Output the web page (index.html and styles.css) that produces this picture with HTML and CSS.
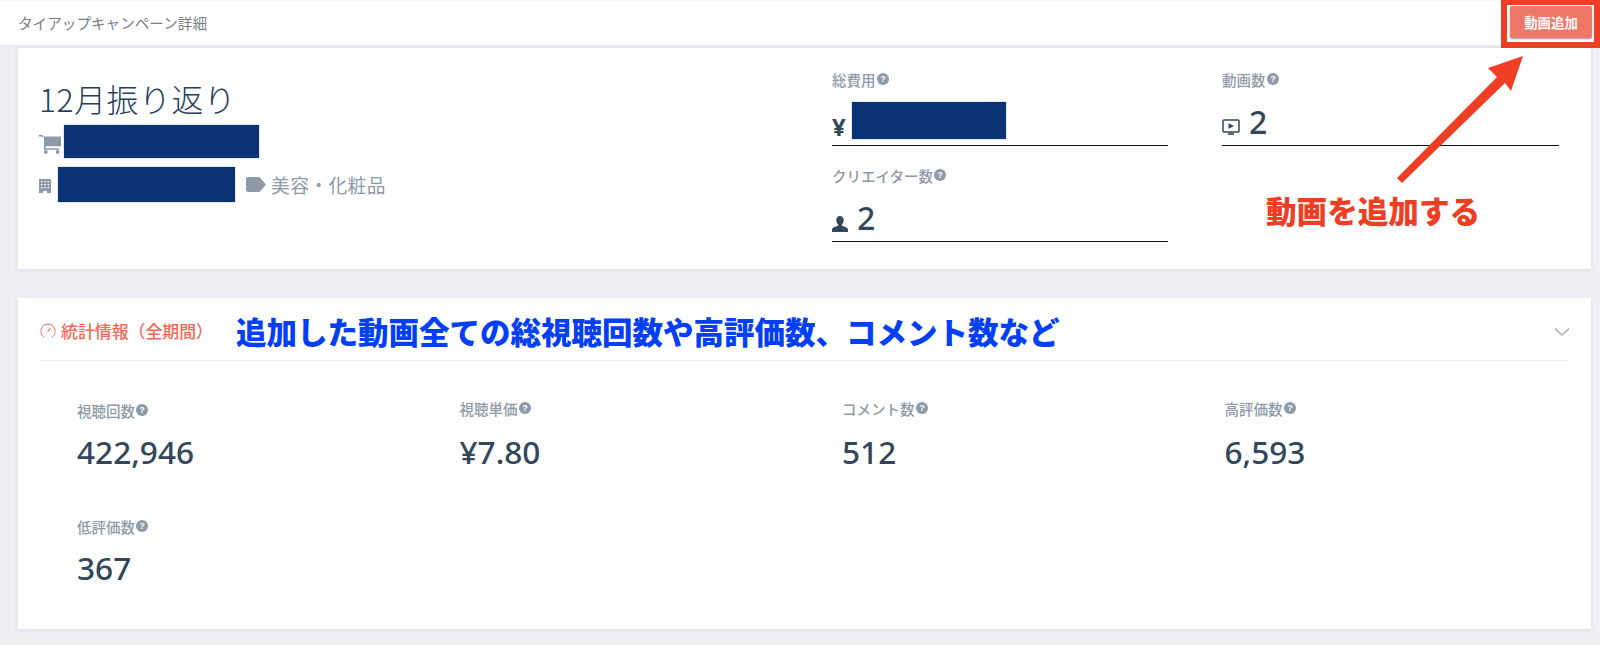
FILE: index.html
```html
<!DOCTYPE html>
<html lang="ja">
<head>
<meta charset="utf-8">
<title>タイアップキャンペーン詳細</title>
<link rel="stylesheet" href="styles.css">
</head>
<body>
<header class="topbar">
  <span class="crumb">タイアップキャンペーン詳細</span>
  <button class="add-btn">動画追加</button>
</header>
<main class="content">
  <section class="card summary">
    <div class="info">
      <h1 class="title">12月振り返り</h1>
      <div class="info-row row-product">
        <svg class="ic-cart" viewBox="0 0 22 20"><path d="M0 1h3.600l1 1.600H22v9.600H6.600v2h13.600v1.600H5V3.400L2.800 2.600H0z" fill="#8e9aa8"/><circle cx="6.800" cy="18" r="1.900" fill="#8e9aa8"/><circle cx="18.600" cy="18" r="1.900" fill="#8e9aa8"/></svg>
        <span class="redact redact-product"></span>
      </div>
      <div class="info-row row-company">
        <svg class="ic-building" viewBox="0 0 12 14"><path fill="#8e9aa8" fill-rule="evenodd" d="M0 0h12v14H8v-2H4v2H0zM2 2v1.200h1.500V2zm3.200 0v1.200h1.600V2zM8.500 2v1.200H10V2zM2 5v1.200h1.500V5zm3.200 0v1.200h1.600V5zM8.500 5v1.200H10V5zM2 8v1.200h1.500V8zm3.200 0v1.200h1.600V8zM8.500 8v1.200H10V8z"/></svg>
        <span class="redact redact-company"></span>
        <svg class="ic-tag" viewBox="0 0 20 15"><path d="M2 0h11.500L20 7.500 13.500 15H2a2 2 0 0 1-2-2V2a2 2 0 0 1 2-2z" fill="#8e9aa8"/></svg>
        <span class="category">美容・化粧品</span>
      </div>
    </div>
    <div class="fields">
      <div class="field">
        <div class="label">総費用<svg class="q" viewBox="0 0 12 12"><use href="#q"/></svg></div>
        <div class="field-value">
          <span class="yen">¥</span><span class="redact redact-cost"></span>
        </div>
      </div>
      <div class="field">
        <div class="label">動画数<svg class="q" viewBox="0 0 12 12"><use href="#q"/></svg></div>
        <div class="field-value">
          <svg class="ic-tv" viewBox="0 0 18 16"><path d="M2 1h14a1 1 0 0 1 1 1v10a1 1 0 0 1-1 1H2a1 1 0 0 1-1-1V2a1 1 0 0 1 1-1z" fill="none" stroke="#33475b" stroke-width="1.500"/><path d="M6.500 4.300v5.400L12 7z" fill="#33475b"/><path d="M6 15h6" stroke="#33475b" stroke-width="1.600"/></svg>
          <span class="num">2</span>
        </div>
      </div>
      <div class="field">
        <div class="label">クリエイター数<svg class="q" viewBox="0 0 12 12"><use href="#q"/></svg></div>
        <div class="field-value">
          <svg class="ic-user" viewBox="0 0 16 16"><path d="M8 0c2.300 0 3.700 1.700 3.700 4.200 0 2-.9 3.500-1.800 4.300v1.200c2.800.8 6.100 2.100 6.100 3.800V16H0v-2.500c0-1.700 3.300-3 6.100-3.800V8.500C5.200 7.700 4.300 6.200 4.300 4.200 4.300 1.700 5.700 0 8 0z" fill="#33475b"/></svg>
          <span class="num">2</span>
        </div>
      </div>
    </div>
  </section>

  <section class="card stats">
    <div class="stats-head">
      <svg class="ic-gauge" viewBox="0 0 16 16"><path d="M4.300 14.300A7.200 7.200 0 1 1 11.700 14.300" fill="none" stroke="#f2776a" stroke-width="1"/><path d="M7.600 8.600 10.700 5.400" stroke="#f2776a" stroke-width="1.200"/><path d="M8 1v1.300" stroke="#f2776a"/></svg>
      <span class="stats-title">統計情報（全期間）</span>
      <svg class="chevron" viewBox="0 0 16 10"><path d="M1 1.500 8 8l7-6.500" fill="none" stroke="#a9acb2" stroke-width="1.500"/></svg>
    </div>
    <div class="stat-grid">
      <div class="stat"><div class="label">視聴回数<svg class="q" viewBox="0 0 12 12"><use href="#q"/></svg></div><div class="stat-num">422,946</div></div>
      <div class="stat"><div class="label raised">視聴単価<svg class="q" viewBox="0 0 12 12"><use href="#q"/></svg></div><div class="stat-num">¥7.80</div></div>
      <div class="stat"><div class="label raised">コメント数<svg class="q" viewBox="0 0 12 12"><use href="#q"/></svg></div><div class="stat-num">512</div></div>
      <div class="stat"><div class="label raised">高評価数<svg class="q" viewBox="0 0 12 12"><use href="#q"/></svg></div><div class="stat-num">6,593</div></div>
      <div class="stat"><div class="label">低評価数<svg class="q" viewBox="0 0 12 12"><use href="#q"/></svg></div><div class="stat-num">367</div></div>
    </div>
  </section>
</main>

<div class="note-box"></div>
<svg class="note-arrow" viewBox="0 0 1600 645"><path d="M1397 178 1497 77 1488 68 1523 56 1511 91 1505 83 1402 183z" fill="#ee3f24"/></svg>
<div class="note-red">動画を追加する</div>
<div class="note-blue">追加した動画全ての総視聴回数や高評価数、コメント数など</div>

<svg class="defs" width="0" height="0"><defs><g id="q"><circle cx="6" cy="6" r="6" fill="#8e9aa8"/><text x="6" y="9.200" text-anchor="middle" font-size="9" font-weight="700" font-family="Liberation Sans, sans-serif" fill="#fff">?</text></g></defs></svg>
</body>
</html>
```
FILE: styles.css
```css
* { box-sizing: border-box; }
html, body { margin: 0; padding: 0; }
body {
  width: 1600px;
  height: 645px;
  overflow: hidden;
  position: relative;
  background: #eef0f4;
  font-family: "Noto Sans CJK JP", "Noto Sans", sans-serif;
  color: #33475b;
}
.topbar {
  height: 48px;
  background: #fff;
  border-top: 1px solid #f6f6f8;
  border-bottom: 3px solid #e8ebf2;
  display: flex;
  align-items: flex-start;
  justify-content: space-between;
  padding-left: 18px;
}
.crumb { font-size: 14.600px; line-height: 20px; margin-top: 12px; color: #7b7f85; }
.add-btn {
  width: 82px;
  height: 32px;
  margin: 5px 8px 0 0;
  padding: 0;
  border: 0;
  border-radius: 2px;
  background: #ef7767;
  box-shadow: 0 1px 2px rgba(0, 0, 0, .4);
  color: #fff;
  font: 700 13.400px "Noto Sans CJK JP", sans-serif;
}
.content { padding: 0 9px 0 18px; }
.card { background: #fff; box-shadow: 0 1px 4px rgba(60, 70, 90, .12); }
.summary { height: 221px; display: flex; margin-bottom: 29px; }
.info { width: 814px; padding: 32px 0 0 21px; }
.title { margin: 0; font-size: 31.800px; font-weight: 300; line-height: 36px; letter-spacing: .6px; color: #253f5b; }
.info-row { display: flex; align-items: center; }
.row-product { margin-top: 9px; height: 33px; }
.row-company { margin-top: 9px; height: 35px; }
.redact { display: block; background: #0b3275; box-shadow: 0 0 1px #5a7aa8; }
.redact-product { width: 195px; height: 33px; margin-left: 3px; }
.redact-company { width: 177px; height: 35px; margin-left: 7px; }
.redact-cost { width: 154px; height: 37px; margin-bottom: 2px; }
.ic-cart { width: 22px; height: 20px; margin-top: 5px; }
.ic-building { width: 12px; height: 14px; margin-top: 2px; }
.ic-tag { width: 20px; height: 15px; margin-left: 11px; }
.category { font-size: 18.800px; line-height: 24px; color: #8e9aa8; margin-left: 5px; letter-spacing: .35px; }
.fields {
  width: 745px;
  display: grid;
  grid-template-columns: 336px 337px;
  column-gap: 54px;
  grid-auto-rows: 96px;
  padding-top: 23px;
}
.label {
  display: flex;
  align-items: center;
  font-size: 14.500px;
  line-height: 18px;
  color: #8e9aa8;
  font-weight: 500;
}
.raised { margin-top: -2px; padding-bottom: 2px; }
.q { width: 12px; height: 12px; margin: -2px 0 0 1px; }
.field-value {
  height: 57px;
  border-bottom: 1px solid #111;
  display: flex;
  align-items: flex-end;
  padding-bottom: 4px;
}
.yen { font-family: "Noto Sans", sans-serif; font-size: 24px; line-height: 26px; font-weight: 700; margin-bottom: 1px; width: 20px; }
.num { font-family: "Noto Sans", sans-serif; font-size: 32px; line-height: 40px; font-weight: 500; margin-left: 9px; margin-bottom: -1px; }
.ic-tv { width: 18px; height: 16px; margin-bottom: 6px; }
.ic-user { width: 16px; height: 16px; margin-bottom: 5px; }
.stats { height: 331px; padding: 0 21px 0 22px; }
.stats-head {
  height: 63px;
  padding-top: 3px;
  border-bottom: 1px solid #f1f2f7;
  display: flex;
  align-items: center;
}
.ic-gauge { width: 16px; height: 16px; }
.stats-title { font-size: 16.900px; font-weight: 500; color: #f2695a; margin-left: 5px; }
.chevron { width: 16px; height: 10px; margin: 2px 0 0 auto; }
.stat-grid {
  display: grid;
  grid-template-columns: repeat(4, 382.500px);
  grid-auto-rows: 115.500px;
  padding: 41px 0 0 37px;
}
.stat-num { font-family: "Noto Sans", sans-serif; font-size: 31.600px; line-height: 40px; font-weight: 500; margin-top: 12px; color: #33475b; }
.note-box {
  position: absolute;
  left: 1501px;
  top: -1px;
  width: 99px;
  height: 49px;
  border: 6px solid #ee3f24;
}
.note-arrow { position: absolute; left: 0; top: 0; width: 1600px; height: 645px; pointer-events: none; }
.note-red {
  position: absolute;
  left: 1266px;
  top: 189px;
  font-size: 30.600px;
  line-height: 42px;
  font-weight: 900;
  color: #ee3f24;
}
.note-blue {
  position: absolute;
  left: 236px;
  top: 310px;
  font-size: 30.500px;
  line-height: 42px;
  font-weight: 900;
  color: #0340f5;
}
.defs { position: absolute; }
```
